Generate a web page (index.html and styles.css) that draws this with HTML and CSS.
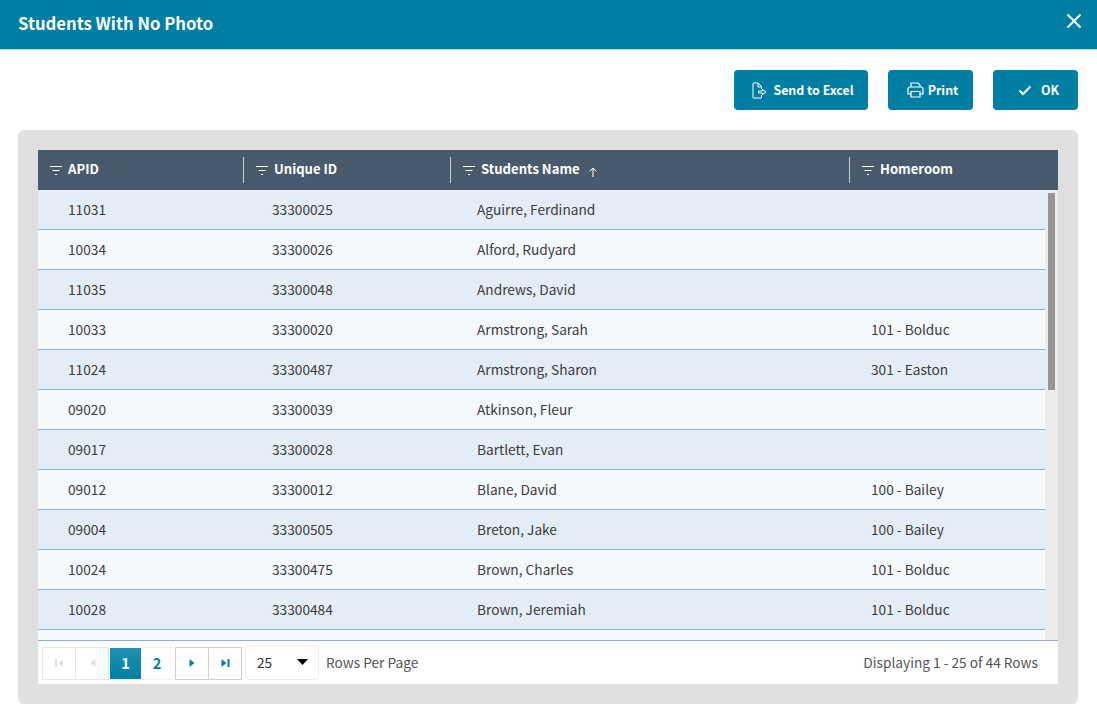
FILE: index.html
```html
<!DOCTYPE html>
<html lang="en">
<head>
<meta charset="utf-8">
<title>Students With No Photo</title>
<link rel="stylesheet" href="styles.css">
</head>
<body>
<header class="titlebar">
  <h1 class="title">Students With No Photo</h1>
  <svg class="close" width="16" height="16" viewBox="0 0 16 16"><path d="M1.500 1.500l13 13M14.500 1.500l-13 13" stroke="#fff" stroke-width="2" fill="none"/></svg>
</header>
<div class="toolbar">
  <button class="btn btn-excel"><svg width="15" height="17" viewBox="0 0 15 17" fill="none" stroke="#fff" stroke-width="1"><path d="M9.500 7V4.500L6 1H1.500a.5.5 0 0 0-.5.5v14a.5.5 0 0 0 .5.5h7.500a.5.5 0 0 0 .5-.5V13"/><path d="M6 1v4h3.500"/><path d="M6.500 9h4V7.500L14 10l-3.500 2.500V11h-4z"/></svg>Send to Excel</button>
  <button class="btn btn-print"><svg width="17" height="16" viewBox="0 0 17 16" fill="none" stroke="#fff" stroke-width="1.200"><path d="M4 5V1h7l2 2v2"/><path d="M4 12H1V7a2 2 0 0 1 2-2h11a2 2 0 0 1 2 2v5h-3"/><path d="M4 9.500h9V15H4z"/></svg>Print</button>
  <button class="btn btn-ok"><svg width="14" height="11" viewBox="0 0 14 11" fill="none" stroke="#fff" stroke-width="2"><path d="M1.500 5.500L5 9l7.500-7.500"/></svg>OK</button>
</div>
<main class="panel">
  <div class="grid">
    <div class="grid-head">
      <div class="th th-apid"><svg class="filter" width="12" height="10" viewBox="0 0 12 10"><path d="M0 .5h12M2.500 4.500h7M5 8.500h2" stroke="#fff" fill="none"/></svg>APID</div>
      <div class="th th-uid"><svg class="filter" width="12" height="10" viewBox="0 0 12 10"><path d="M0 .5h12M2.500 4.500h7M5 8.500h2" stroke="#fff" fill="none"/></svg>Unique ID</div>
      <div class="th th-name"><svg class="filter" width="12" height="10" viewBox="0 0 12 10"><path d="M0 .5h12M2.500 4.500h7M5 8.500h2" stroke="#fff" fill="none"/></svg>Students Name<svg class="sort" width="8" height="10" viewBox="0 0 8 10"><path d="M4 10V1M.7 4.300L4 1l3.300 3.300" stroke="#fff" fill="none"/></svg></div>
      <div class="th th-room"><svg class="filter" width="12" height="10" viewBox="0 0 12 10"><path d="M0 .5h12M2.500 4.500h7M5 8.500h2" stroke="#fff" fill="none"/></svg>Homeroom</div>
    </div>
    <div class="grid-body">
      <div class="rows">
        <div class="row"><span>11031</span><span>33300025</span><span>Aguirre, Ferdinand</span><span></span></div>
        <div class="row"><span>10034</span><span>33300026</span><span>Alford, Rudyard</span><span></span></div>
        <div class="row"><span>11035</span><span>33300048</span><span>Andrews, David</span><span></span></div>
        <div class="row"><span>10033</span><span>33300020</span><span>Armstrong, Sarah</span><span>101 - Bolduc</span></div>
        <div class="row"><span>11024</span><span>33300487</span><span>Armstrong, Sharon</span><span>301 - Easton</span></div>
        <div class="row"><span>09020</span><span>33300039</span><span>Atkinson, Fleur</span><span></span></div>
        <div class="row"><span>09017</span><span>33300028</span><span>Bartlett, Evan</span><span></span></div>
        <div class="row"><span>09012</span><span>33300012</span><span>Blane, David</span><span>100 - Bailey</span></div>
        <div class="row"><span>09004</span><span>33300505</span><span>Breton, Jake</span><span>100 - Bailey</span></div>
        <div class="row"><span>10024</span><span>33300475</span><span>Brown, Charles</span><span>101 - Bolduc</span></div>
        <div class="row"><span>10028</span><span>33300484</span><span>Brown, Jeremiah</span><span>101 - Bolduc</span></div>
        <div class="row row-cut"></div>
      </div>
      <div class="scrollbar"><div class="thumb"></div></div>
    </div>
    <div class="pager">
      <div class="pg-group">
        <div class="pg pg-off"><svg width="10" height="10" viewBox="0 0 10 10"><path d="M1 1h2v8H1zM9 1v8L4 5z" fill="#e0e0e0"/></svg></div>
        <div class="pg pg-off"><svg width="7" height="10" viewBox="0 0 7 10"><path d="M6.500 1v8L1 5z" fill="#e0e0e0"/></svg></div>
        <div class="pg-num pg-cur">1</div>
        <div class="pg-num">2</div>
        <div class="pg pg-on pg-first-on"><svg width="6" height="8" viewBox="0 0 6 8"><path d="M.5 0v8L5.500 4z" fill="#007ea3"/></svg></div>
        <div class="pg pg-on"><svg width="9" height="8" viewBox="0 0 9 8"><path d="M.5 0v8L5.500 4zM6.500 0H8.500v8H6.500z" fill="#007ea3"/></svg></div>
      </div>
      <div class="select"><span>25</span><svg width="11" height="6" viewBox="0 0 11 6"><path d="M0 0h11L5.500 6z" fill="#000"/></svg></div>
      <span class="pg-label">Rows Per Page</span>
      <span class="pg-info">Displaying 1 - 25 of 44 Rows</span>
    </div>
  </div>
</main>
</body>
</html>
```
FILE: styles.css
```css
* { box-sizing: border-box; }
html, body { margin: 0; height: 100%; }
body {
  background: #fff;
  font-family: "Noto Sans CJK SC", "Noto Sans", sans-serif;
  font-size: 13.700px;
  color: #3c3c3c;
  overflow: hidden;
}
.titlebar {
  height: 50px;
  background: #007ea3;
  display: flex;
  align-items: center;
  justify-content: space-between;
  padding: 0 15px 3px 18px;
  border-bottom: 1px solid #b5d8e3;
}
.title { margin: 0; font-size: 16.700px; line-height: 24px; font-weight: 700; color: #fff; }
.close { align-self: flex-start; margin-top: 13px; }
.toolbar {
  display: flex;
  justify-content: flex-end;
  gap: 20px;
  padding: 20px 19px 20px 0;
}
.btn {
  height: 40px;
  border: 0;
  border-radius: 4px;
  background: #007ea3;
  color: #fff;
  font: 700 12.400px/20px "Noto Sans CJK SC", "Noto Sans", sans-serif;
  display: flex;
  align-items: center;
  justify-content: center;
  padding: 0;
}
.btn-excel { width: 134px; gap: 6px; padding-left: 4px; }
.btn-print { width: 85px; gap: 4px; padding-left: 4px; }
.btn-ok { width: 85px; gap: 9px; padding-left: 6px; }
.panel {
  margin: 0 19px 0 18px;
  height: 574px;
  padding: 20px;
  background: #dfdfdf;
  border-radius: 6px;
}
.grid { display: flex; flex-direction: column; height: 534px; background: #fff; }
.grid-head {
  height: 40px;
  flex: none;
  background: #495a6c;
  display: grid;
  grid-template-columns: 205px 207px 399px 1fr;
  align-items: center;
}
.th {
  height: 26px;
  display: flex;
  align-items: center;
  gap: 6px;
  padding-left: 12px;
  padding-bottom: 2px;
  color: #fff;
  font-size: 13.100px;
  font-weight: 700;
  line-height: 20px;
  border-left: 1px solid #c5ccd3;
}
.th-apid { border-left: 0; }
.filter { flex: none; margin-top: 3px; }
.sort { margin-left: 3px; margin-top: 5px; }
.grid-body { flex: 1; min-height: 0; display: flex; overflow: hidden; }
.rows { width: 1007px; flex: none; }
.row {
  height: 40px;
  display: grid;
  grid-template-columns: 204px 205px 394px 1fr;
  align-items: center;
  padding: 0 0 2px 30px;
  border-bottom: 1px solid #8fb0cf;
  background: #f5f9fc;
  line-height: 20px;
}
.row:nth-child(odd) { background: #e4ecf6; }
.row-cut { height: 10px; border-bottom: 0; padding: 0; }
.scrollbar { flex: 1; background: #ececec; padding: 3px 3px 0; }
.thumb { width: 7px; height: 197px; background: #969696; }
.pager {
  flex: none;
  height: 44px;
  border-top: 1px solid #8fb0cf;
  display: flex;
  align-items: center;
  padding: 0 20px 0 4px;
  color: #555;
  line-height: 18px;
}
.pg-group { display: flex; height: 33px; margin-top: 1px; }
.pg {
  width: 34px;
  display: flex;
  align-items: center;
  justify-content: center;
  border: 1px solid #e6e6e6;
  margin-left: -1px;
}
.pg:first-child { margin-left: 0; }
.pg-on { border-color: #cfcfcf; }
.pg-first-on { margin-left: 2px; }
.pg-num {
  width: 32px;
  display: flex;
  align-items: center;
  justify-content: center;
  color: #007ea3;
  font-size: 14.500px;
  font-weight: 700;
  border-top: 1px solid #f0f0f0;
  border-bottom: 1px solid #f0f0f0;
}
.pg-cur { width: 31px; margin: 1px 0 1px 1px; color: #fff; background: linear-gradient(#2391b2, #007ea3); border: 0; }
.select {
  width: 74px;
  height: 35px;
  margin-left: 3px;
  border: 1px solid #eee;
  border-radius: 4px;
  display: flex;
  align-items: center;
  justify-content: space-between;
  padding: 0 10px 2px 11px;
  color: #333;
}
.pg-label { margin: 0 0 2px 7px; }
.pg-info { margin: 0 0 2px auto; }
```
